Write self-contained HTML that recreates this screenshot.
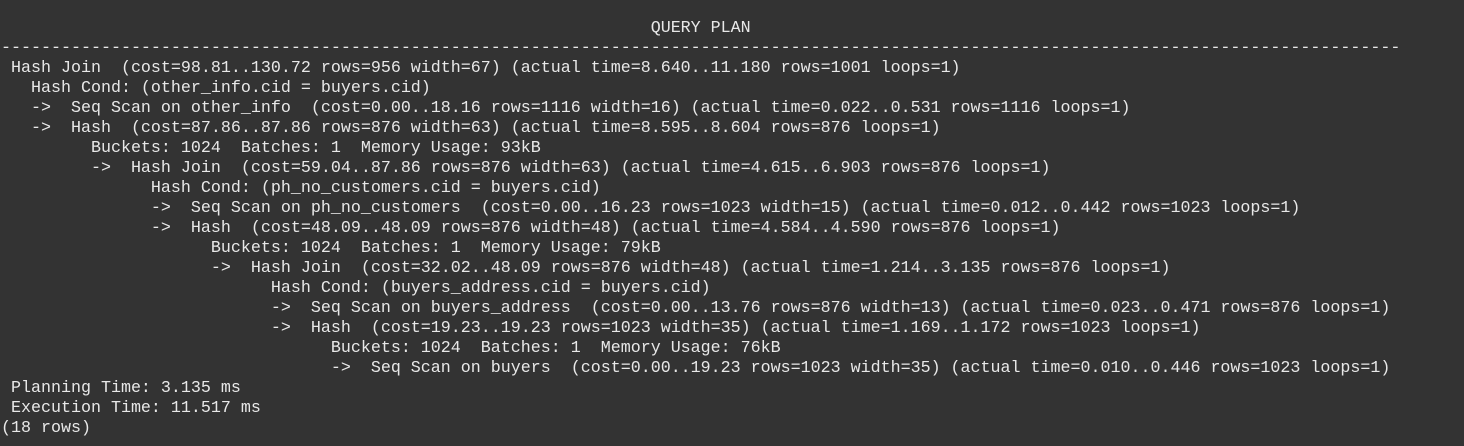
<!DOCTYPE html>
<html><head><style>
html,body{margin:0;padding:0;background:#333333;width:1464px;height:446px;overflow:hidden}
pre{margin:0;padding:19px 0 0 1px;font-family:"Liberation Mono","DejaVu Sans Mono",monospace;font-size:16.667px;line-height:20px;color:#e8e8e8;white-space:pre}
</style></head><body><pre>                                                                 QUERY PLAN
--------------------------------------------------------------------------------------------------------------------------------------------
 Hash Join  (cost=98.81..130.72 rows=956 width=67) (actual time=8.640..11.180 rows=1001 loops=1)
   Hash Cond: (other_info.cid = buyers.cid)
   -&gt;  Seq Scan on other_info  (cost=0.00..18.16 rows=1116 width=16) (actual time=0.022..0.531 rows=1116 loops=1)
   -&gt;  Hash  (cost=87.86..87.86 rows=876 width=63) (actual time=8.595..8.604 rows=876 loops=1)
         Buckets: 1024  Batches: 1  Memory Usage: 93kB
         -&gt;  Hash Join  (cost=59.04..87.86 rows=876 width=63) (actual time=4.615..6.903 rows=876 loops=1)
               Hash Cond: (ph_no_customers.cid = buyers.cid)
               -&gt;  Seq Scan on ph_no_customers  (cost=0.00..16.23 rows=1023 width=15) (actual time=0.012..0.442 rows=1023 loops=1)
               -&gt;  Hash  (cost=48.09..48.09 rows=876 width=48) (actual time=4.584..4.590 rows=876 loops=1)
                     Buckets: 1024  Batches: 1  Memory Usage: 79kB
                     -&gt;  Hash Join  (cost=32.02..48.09 rows=876 width=48) (actual time=1.214..3.135 rows=876 loops=1)
                           Hash Cond: (buyers_address.cid = buyers.cid)
                           -&gt;  Seq Scan on buyers_address  (cost=0.00..13.76 rows=876 width=13) (actual time=0.023..0.471 rows=876 loops=1)
                           -&gt;  Hash  (cost=19.23..19.23 rows=1023 width=35) (actual time=1.169..1.172 rows=1023 loops=1)
                                 Buckets: 1024  Batches: 1  Memory Usage: 76kB
                                 -&gt;  Seq Scan on buyers  (cost=0.00..19.23 rows=1023 width=35) (actual time=0.010..0.446 rows=1023 loops=1)
 Planning Time: 3.135 ms
 Execution Time: 11.517 ms
(18 rows)
</pre></body></html>
